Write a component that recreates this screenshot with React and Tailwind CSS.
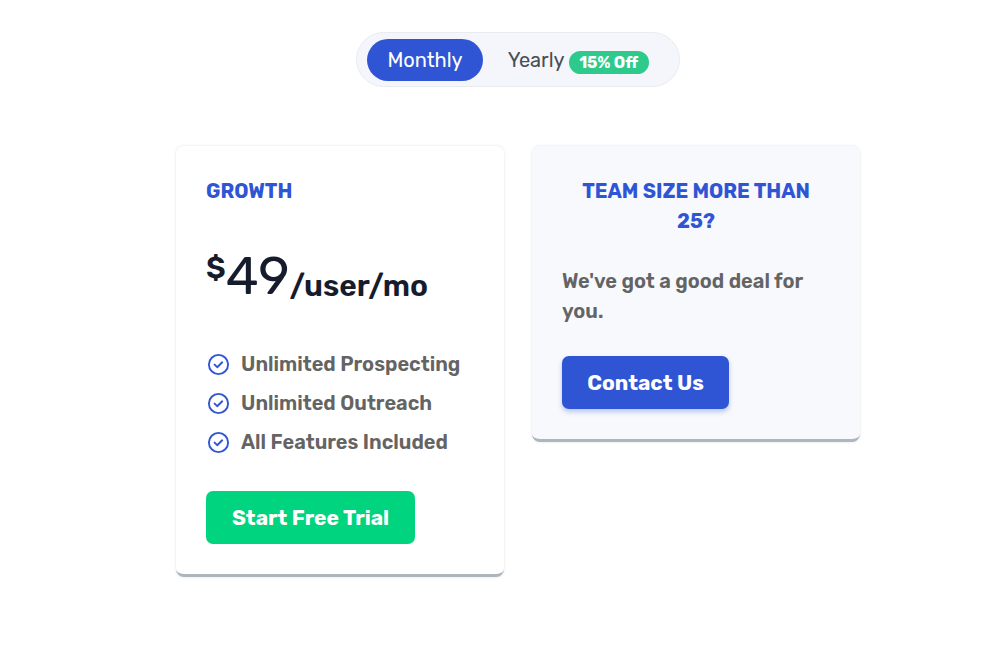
import React, { useState } from "react";

const features = ["Unlimited Prospecting", "Unlimited Outreach", "All Features Included"];

const CheckIcon = () => (
  <svg className="w-6 h-6 shrink-0" viewBox="0 0 24 24" fill="none" stroke="#2f55d4" strokeLinecap="round" strokeLinejoin="round" aria-hidden="true">
    <circle cx="12.5" cy="12.5" r="9.6" strokeWidth="1.9" />
    <path d="M8.6 12.6l2.6 2.6 5-4.9" strokeWidth="1.9" />
  </svg>
);

const Card = ({ className, children }) => (
  <section
    className={`rounded-lg border-b-3 border-[#adb5bd] p-[30px] shadow-[0_0_3px_rgba(60,72,88,0.15)] ${className}`}
  >
    {children}
  </section>
);

const BillingToggle = ({ billing, onChange }) => {
  const active = "bg-[#2f55d4] text-white";
  const inactive = "text-[#494d57]";

  return (
    <div className="flex h-[55px] items-center gap-[5px] rounded-full border border-[#e9ecef] bg-[#f4f6fb] px-2.5">
      <button
        type="button"
        aria-pressed={billing === "monthly"}
        onClick={() => onChange("monthly")}
        className={`h-[42px] min-w-[115px] rounded-full px-5 text-xl ${billing === "monthly" ? active : inactive}`}
      >
        Monthly
      </button>
      <button
        type="button"
        aria-pressed={billing === "yearly"}
        onClick={() => onChange("yearly")}
        className={`flex h-[42px] min-w-[181px] items-center justify-between rounded-full px-5 text-xl ${billing === "yearly" ? active : inactive}`}
      >
        Yearly
        <span className="mt-1.5 min-w-20 rounded-full bg-[#2eca8b] px-2 text-base leading-[23px] font-bold text-white">
          15% Off
        </span>
      </button>
    </div>
  );
};

const App = () => {
  const [billing, setBilling] = useState("monthly");

  return (
    <main className="min-h-screen bg-white py-8 pr-4 pl-[45px] font-['Rubik','Roboto',sans-serif]">
      <div className="mx-auto max-w-[684px]">
        <div className="flex justify-center">
          <BillingToggle billing={billing} onChange={setBilling} />
        </div>

        <div className="mt-[59px] grid grid-cols-1 items-start gap-7 sm:grid-cols-2">
          <Card className="bg-white">
            <h2 className="text-xl leading-[30px] font-bold text-[#2f55d4] uppercase">Growth</h2>
            <p className="mt-[30px] flex h-[83px] items-center pb-1 text-[#161c2d]">
              <span className="mb-4 text-3xl leading-9 font-semibold">$</span>
              <span className="text-[53px] leading-[60px] font-normal">49</span>
              <span className="mt-5 text-3xl leading-9 font-semibold">/user/mo</span>
            </p>
            <ul className="mt-[30px] flex flex-col gap-[9px]">
              {features.map((feature) => (
                <li key={feature} className="flex items-center gap-[11px] text-xl leading-[30px] font-semibold text-[#646464]">
                  <CheckIcon />
                  {feature}
                </li>
              ))}
            </ul>
            <button
              type="button"
              className="mt-[34px] block h-[53px] min-w-[209px] rounded-[7px] bg-[#00d47e] px-6 text-[21px] font-bold text-white"
            >
              Start Free Trial
            </button>
          </Card>

          <Card className="bg-[#f8f9fd]">
            <h2 className="text-center text-xl leading-[30px] font-bold text-[#2f55d4] uppercase">
              Team size more than 25?
            </h2>
            <p className="mt-[30px] text-xl leading-[30px] font-semibold text-[#646464]">
              We've got a good deal for you.
            </p>
            <button
              type="button"
              className="mt-[30px] block h-[53px] min-w-[167px] rounded-[7px] bg-[#2f55d4] px-6 text-[21px] font-bold text-white shadow-[0_3px_5px_rgba(47,85,212,0.3)]"
            >
              Contact Us
            </button>
          </Card>
        </div>
      </div>
    </main>
  );
};

export default App;
